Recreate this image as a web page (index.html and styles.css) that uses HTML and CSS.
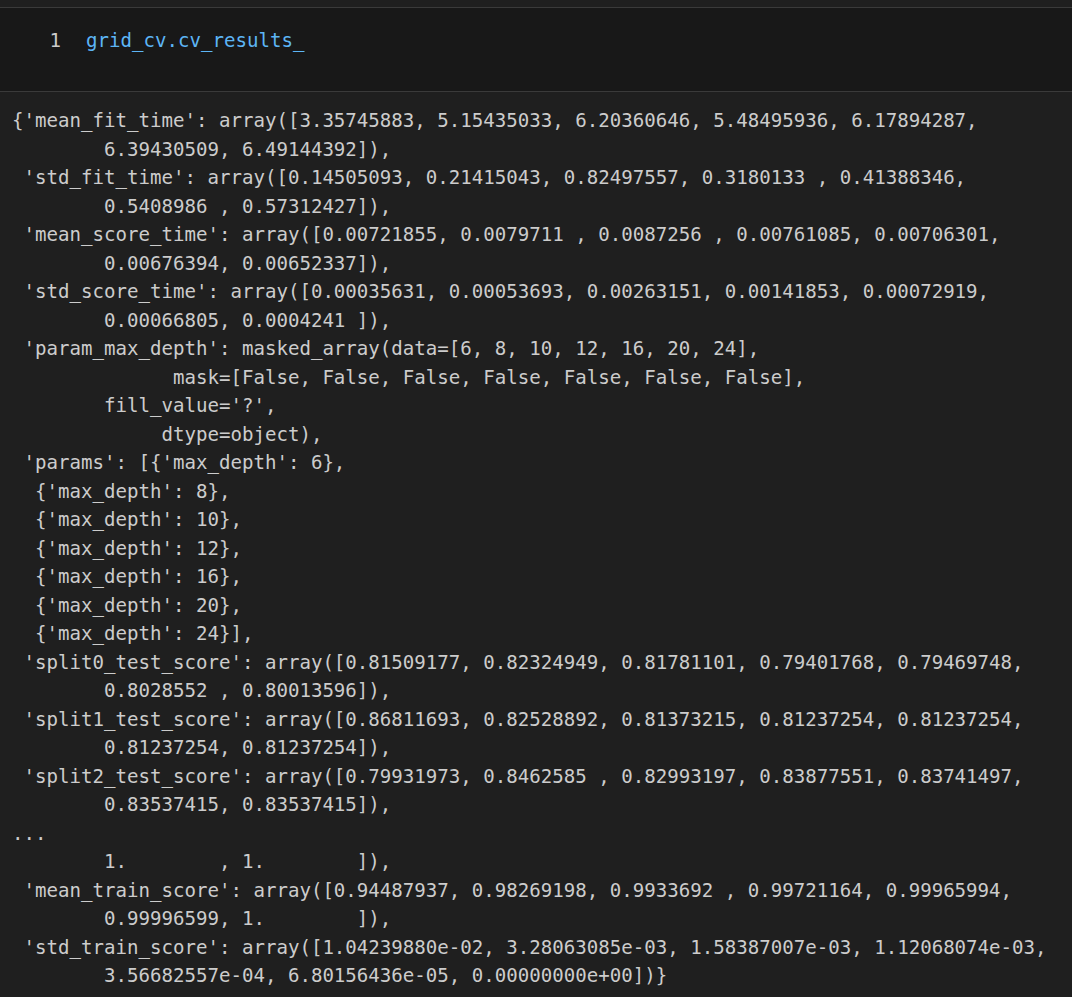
FILE: index.html
```html
<!DOCTYPE html>
<html>
<head>
<meta charset="utf-8">
<link rel="stylesheet" href="styles.css">
</head>
<body>
<div class="notebook">
  <div class="top-strip"></div>
  <div class="cell-input">
    <div class="code-line"><span class="line-no">1</span><span class="code">grid_cv.cv_results_</span></div>
  </div>
  <div class="cell-output">
<pre class="output">{'mean_fit_time': array([3.35745883, 5.15435033, 6.20360646, 5.48495936, 6.17894287,
        6.39430509, 6.49144392]),
 'std_fit_time': array([0.14505093, 0.21415043, 0.82497557, 0.3180133 , 0.41388346,
        0.5408986 , 0.57312427]),
 'mean_score_time': array([0.00721855, 0.0079711 , 0.0087256 , 0.00761085, 0.00706301,
        0.00676394, 0.00652337]),
 'std_score_time': array([0.00035631, 0.00053693, 0.00263151, 0.00141853, 0.00072919,
        0.00066805, 0.0004241 ]),
 'param_max_depth': masked_array(data=[6, 8, 10, 12, 16, 20, 24],
              mask=[False, False, False, False, False, False, False],
        fill_value='?',
             dtype=object),
 'params': [{'max_depth': 6},
  {'max_depth': 8},
  {'max_depth': 10},
  {'max_depth': 12},
  {'max_depth': 16},
  {'max_depth': 20},
  {'max_depth': 24}],
 'split0_test_score': array([0.81509177, 0.82324949, 0.81781101, 0.79401768, 0.79469748,
        0.8028552 , 0.80013596]),
 'split1_test_score': array([0.86811693, 0.82528892, 0.81373215, 0.81237254, 0.81237254,
        0.81237254, 0.81237254]),
 'split2_test_score': array([0.79931973, 0.8462585 , 0.82993197, 0.83877551, 0.83741497,
        0.83537415, 0.83537415]),
...
        1.        , 1.        ]),
 'mean_train_score': array([0.94487937, 0.98269198, 0.9933692 , 0.99721164, 0.99965994,
        0.99996599, 1.        ]),
 'std_train_score': array([1.04239880e-02, 3.28063085e-03, 1.58387007e-03, 1.12068074e-03,
        3.56682557e-04, 6.80156436e-05, 0.00000000e+00])}</pre>
  </div>
</div>
</body>
</html>
```

FILE: styles.css
```css
html, body {
  margin: 0;
  padding: 0;
  background: #1f1f1f;
}
.notebook {
  width: 1072px;
  height: 997px;
  overflow: hidden;
  background: #1f1f1f;
  font-family: "DejaVu Sans Mono", "Liberation Mono", monospace;
}
.top-strip {
  height: 7px;
  background: #1f1f1f;
  border-bottom: 1px solid #3a3a3a;
}
.cell-input {
  height: 84px;
  background: #181818;
  border-bottom: 1px solid #3a3a3a;
  box-sizing: border-box;
  padding-top: 19px;
}
.code-line {
  display: flex;
  height: 28.5px;
  line-height: 28.5px;
  font-size: 19.1px;
}
.line-no {
  width: 61px;
  text-align: right;
  color: #cccccc;
  flex: none;
}
.code {
  margin-left: 25px;
  color: #5db5f5;
}
.cell-output {
  padding: 15px 0 0 12px;
}
.output {
  margin: 0;
  font-family: "DejaVu Sans Mono", "Liberation Mono", monospace;
  font-size: 19.1px;
  line-height: 28.5px;
  color: #cccccc;
  white-space: pre;
}
```
